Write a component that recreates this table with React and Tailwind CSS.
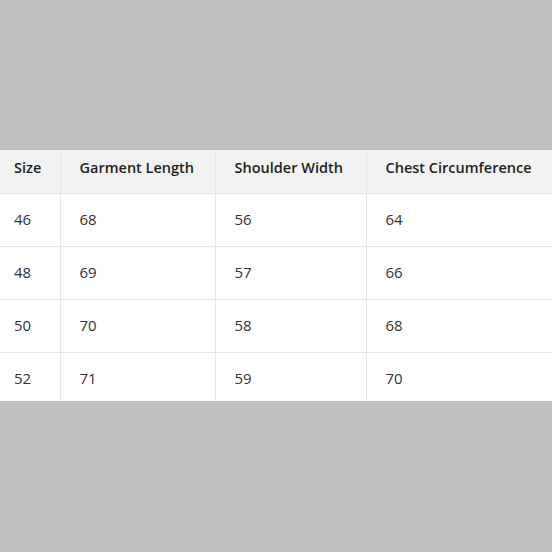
import React from "react";

const rows = [
  ["46", "68", "56", "64"],
  ["48", "69", "57", "66"],
  ["50", "70", "58", "68"],
  ["52", "71", "59", "70"],
];

const headers = ["Size", "Garment Length", "Shoulder Width", "Chest Circumference"];
const widths = ["w-[60px]", "w-[155px]", "w-[151px]", ""];

export default function App() {
  return (
    <div
      className="w-[552px] h-[552px] bg-[#c0c0c0] pt-[150px] overflow-hidden"
      style={{ fontFamily: '"Open Sans", "Noto Sans", sans-serif' }}
    >
      <div className="w-full h-[251px] bg-white overflow-hidden">
        <table className="w-[560px] table-fixed border-collapse">
          <thead>
            <tr className="bg-[#f2f2f2] h-[43px] border-b border-[#e6e6e6]">
              {headers.map((h, i) => (
                <th
                  key={h}
                  className={`${widths[i]} text-left font-semibold text-[14.5px] text-[#1f1f1f] pb-[6px] ${
                    i === 0 ? "pl-[14px]" : "pl-[19px] border-l border-[#e6e6e6]"
                  }`}
                >
                  {h}
                </th>
              ))}
            </tr>
          </thead>
          <tbody>
            {rows.map((r, ri) => (
              <tr key={ri} className="h-[53px] border-b border-[#e6e6e6]">
                {r.map((c, i) => (
                  <td
                    key={i}
                    className={`text-[15px] text-[#333] ${
                      i === 0 ? "pl-[14px]" : "pl-[19px] border-l border-[#e6e6e6]"
                    }`}
                  >
                    {c}
                  </td>
                ))}
              </tr>
            ))}
          </tbody>
        </table>
      </div>
    </div>
  );
}
